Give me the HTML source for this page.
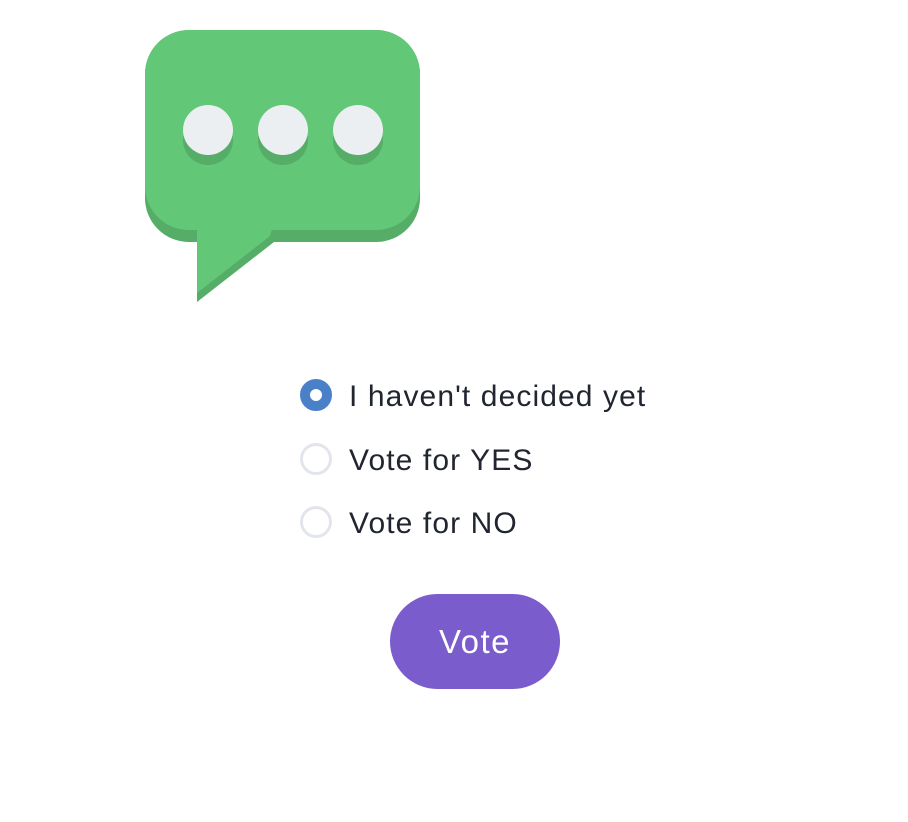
<!DOCTYPE html>
<html><head><style>
body{margin:0;width:908px;height:822px;background:#fff;font-family:"Liberation Sans",sans-serif;position:relative;overflow:hidden}
.r{position:absolute;left:300px;width:32px;height:32px;box-sizing:border-box;border-radius:50%;border:3px solid #e2e6ec;background:#fff}
.r.on{border:10px solid #4a80c8}
.t{position:absolute;left:349px;font-size:30px;letter-spacing:1.1px;color:#212530;line-height:34px}
.btn{position:absolute;left:390px;top:594px;width:170px;height:95px;border-radius:48px;background:#7b5ccc;color:#fff;font-size:33px;letter-spacing:1.5px;text-align:center;line-height:95px}
</style></head><body>
<svg style="position:absolute;left:0;top:0" width="908" height="330">
<path d="M197 236 L197 302 L274 242 Z" fill="#55ad67"/>
<rect x="145" y="30" width="275" height="212" rx="44" fill="#55ad67"/>
<rect x="145" y="30" width="275" height="200" rx="44" fill="#62c878"/>
<path d="M197 200 L197 293 L270 236 L280 200 Z" fill="#62c878"/>
<circle cx="208" cy="140" r="25" fill="#55ad67"/><circle cx="283" cy="140" r="25" fill="#55ad67"/><circle cx="358" cy="140" r="25" fill="#55ad67"/>
<circle cx="208" cy="130" r="25" fill="#eceff1"/><circle cx="283" cy="130" r="25" fill="#eceff1"/><circle cx="358" cy="130" r="25" fill="#eceff1"/>
</svg>
<div class="r on" style="top:379px"></div><div class="t" style="top:380px">I haven't decided yet</div>
<div class="r" style="top:443px"></div><div class="t" style="top:444px">Vote for YES</div>
<div class="r" style="top:506px"></div><div class="t" style="top:507px">Vote for NO</div>
<div class="btn">Vote</div>
</body></html>
